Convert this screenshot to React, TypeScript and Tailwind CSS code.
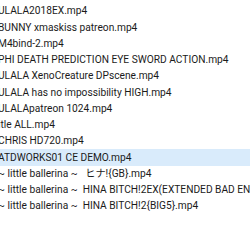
const files = [
  "ULALA2018EX.mp4",
  "BUNNY xmaskiss patreon.mp4",
  "M4bind-2.mp4",
  "PHI DEATH PREDICTION EYE SWORD ACTION.mp4",
  "ULALA XenoCreature DPscene.mp4",
  "ULALA has no impossibility HIGH.mp4",
  "ULALApatreon 1024.mp4",
  "itle ALL.mp4",
  "CHRIS HD720.mp4",
  "ATDWORKS01 CE DEMO.mp4",
  "~ little ballerina ~   ヒナ!{GB}.mp4",
  "~ little ballerina ~  HINA BITCH!2EX(EXTENDED BAD ENDING).mp4",
  "~ little ballerina ~  HINA BITCH!2{BIG5}.mp4",
];

export default function App() {
  return (
    <div
      className="w-[250px] h-[250px] overflow-hidden bg-white pt-[3px] text-[10.2px] text-[#1b1b1b]"
      style={{ fontFamily: 'Roboto, "Noto Sans CJK JP", sans-serif' }}
    >
      {files.map((name, i) => (
        <div
          key={i}
          className={`h-[16.25px] flex items-center whitespace-pre overflow-hidden ${
            i === 9 ? "bg-[#d9ebfb]" : ""
          }`}
        >
          <span className="-ml-[2px]">{name}</span>
        </div>
      ))}
    </div>
  );
}
